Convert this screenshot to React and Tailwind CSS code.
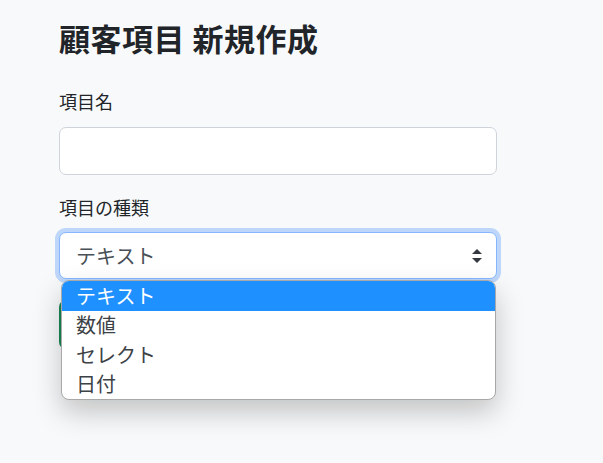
export default function App() {
  const options = ['テキスト', '数値', 'セレクト', '日付'];

  return (
    <div
      className="min-h-[463px] bg-[#f8f9fa] text-[#212529] px-[59px] pt-[18px]"
      style={{ fontFamily: '"Noto Sans CJK JP", "Noto Sans", sans-serif' }}
    >
      <h1 className="text-[31px] font-bold leading-[40px] tracking-[0.5px]">顧客項目 新規作成</h1>

      <div className="mt-[31px] w-[438px]">
        <label className="block text-[18px] leading-[24px] mb-[14px]">項目名</label>
        <input
          type="text"
          className="block w-full h-[48px] bg-white border border-[#ced4da] rounded-[7px] px-4 text-[20px] outline-none"
        />
      </div>

      <div className="mt-[20px] w-[438px]">
        <label className="block text-[18px] leading-[24px] mb-[13px]">項目の種類</label>
        <div className="relative">
          <div className="flex items-center justify-between h-[47px] bg-white border border-[#86b7fe] rounded-[7px] pl-4 pr-[14px] ring-4 ring-[#0d6efd]/25">
            <span className="text-[20px] text-[#495057]">テキスト</span>
            <svg width="10" height="14" viewBox="0 0 10 14" className="text-[#343a40]">
              <path d="M5 0 L10 5 L0 5 Z" fill="currentColor" />
              <path d="M0 9 L10 9 L5 14 Z" fill="currentColor" />
            </svg>
          </div>

          <button
            aria-label="保存"
            className="block mt-[21px] h-[49px] w-[120px] bg-[#198754] rounded-[7px]"
          />

          <ul className="absolute left-[2px] right-[1px] top-[48px] bg-white border border-[#a8a8a8] rounded-[8px] overflow-hidden shadow-[0_12px_28px_rgba(0,0,0,0.22)]">
            {options.map((o, i) => (
              <li
                key={o}
                className={
                  'h-[29.5px] flex items-center px-[14px] text-[20px] ' +
                  (i === 0 ? 'bg-[#1e90ff] text-white' : 'text-[#3d4247]')
                }
              >
                {o}
              </li>
            ))}
          </ul>
        </div>
      </div>
    </div>
  );
}
